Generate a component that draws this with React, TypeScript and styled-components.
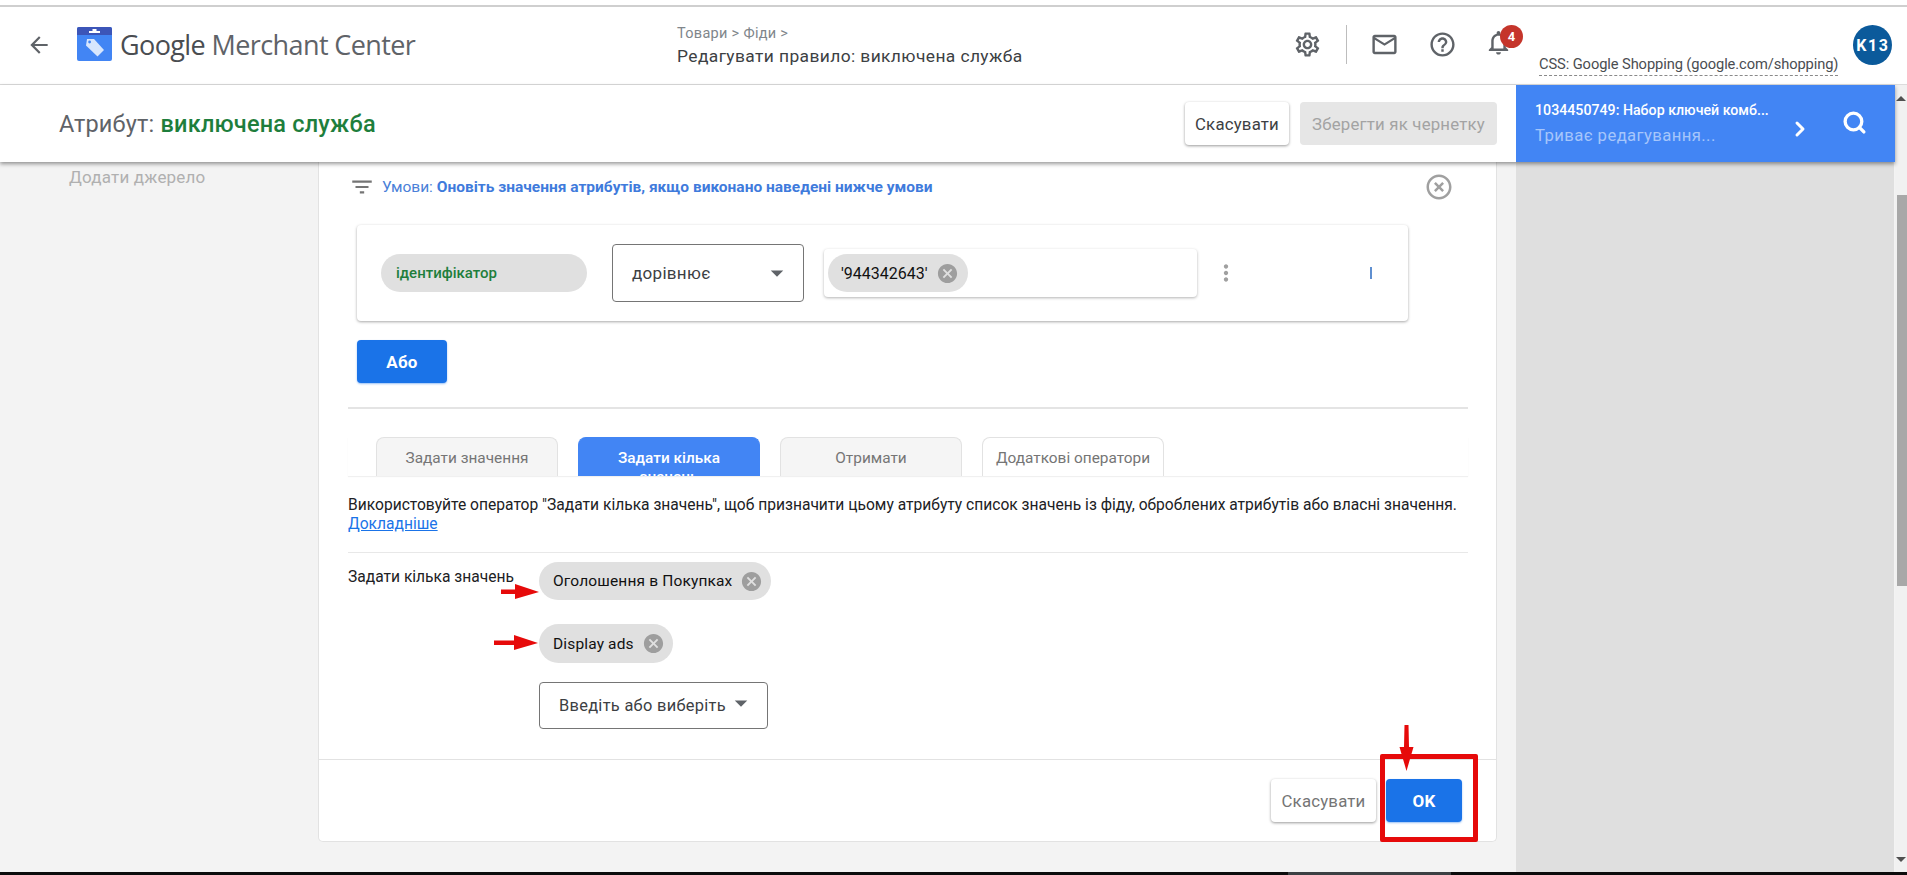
import React from 'react'
import styled, { createGlobalStyle } from 'styled-components'
import { ChevronRight, Search } from 'lucide-react'
import {
  MdArrowBack,
  MdOutlineSettings,
  MdOutlineEmail,
  MdHelpOutline,
  MdNotificationsNone,
  MdFilterList,
  MdCancel,
  MdHighlightOff,
  MdMoreVert,
  MdArrowDropDown,
} from 'react-icons/md'

const GlobalStyle = createGlobalStyle`
  html, body {
    margin: 0;
    padding: 0;
    overflow: hidden;
  }
  * {
    box-sizing: border-box;
  }
  body {
    font-family: Roboto, "Liberation Sans", sans-serif;
    color: #202124;
  }
`

const Page = styled.div`
  width: 1907px;
  height: 875px;
  display: flex;
  flex-direction: column;
  overflow: hidden;
  background: #f3f3f3;
`

const TopLine = styled.div`
  height: 7px;
  background: #fff;
  border-bottom: 2px solid #cfcfcf;
`

const Header = styled.header`
  height: 78px;
  flex: none;
  display: flex;
  align-items: center;
  background: #fff;
  border-bottom: 1px solid #dcdcdc;
  position: relative;
`

const IconSlot = styled.span<{ $size?: number; $color?: string }>`
  display: inline-flex;
  align-items: center;
  justify-content: center;
  flex: none;
  font-size: ${(p) => p.$size ?? 24}px;
  color: ${(p) => p.$color ?? '#5f6368'};
`

const BackSlot = styled(IconSlot)`
  margin-left: 26px;
  margin-top: -1px;
`

const Brand = styled.div`
  display: flex;
  align-items: center;
  width: 625px;
  padding-left: 25px;
  margin-top: -3px;
`

const Wordmark = styled.div`
  margin-left: 8px;
  font-family: "Open Sans", sans-serif;
  font-size: 27px;
  letter-spacing: -0.6px;
  color: #5f6368;
  white-space: nowrap;
`

const WordmarkStrong = styled.span`
  color: #4a4d51;
  font-weight: 500;
`

const Crumbs = styled.div`
  width: 616px;
  display: flex;
  flex-direction: column;
  gap: 4px;
`

const CrumbPath = styled.div`
  font-size: 14.5px;
  letter-spacing: 0.3px;
  color: #80868b;
`

const CrumbTitle = styled.div`
  font-size: 17.4px;
  letter-spacing: 0.4px;
  color: #3c4043;
`

const Tools = styled.div`
  display: flex;
  align-items: center;
  margin-top: -2px;
`

const ToolDivider = styled.div`
  width: 1px;
  height: 39px;
  margin: 0 23px 0 24px;
  background: #bdbdbd;
`

const HelpSlot = styled(IconSlot)`
  margin-left: 29px;
`

const BellWrap = styled.div`
  position: relative;
  margin-left: 27px;
`

const Badge = styled.span`
  position: absolute;
  top: -3px;
  left: 16px;
  width: 23px;
  height: 23px;
  border-radius: 50%;
  background: #c5352b;
  color: #fff;
  font-size: 13px;
  font-weight: 700;
  display: flex;
  align-items: center;
  justify-content: center;
`

const AccountName = styled.div`
  margin-left: 26px;
  margin-top: 40px;
  padding-bottom: 2px;
  border-bottom: 1px dashed #8a8a8a;
  font-size: 14.7px;
  letter-spacing: -0.1px;
  color: #4a4d51;
  white-space: nowrap;
`

const Avatar = styled.div`
  margin-left: 15px;
  margin-top: -1px;
  width: 39px;
  height: 40px;
  border-radius: 50%;
  background: #0b5a9b;
  color: #fff;
  font-size: 16px;
  font-weight: 700;
  letter-spacing: 1.5px;
  display: flex;
  align-items: center;
  justify-content: center;
`

const Workspace = styled.div`
  flex: 1;
  min-height: 0;
  display: flex;
`

const Stage = styled.div`
  flex: 1;
  min-width: 0;
  display: flex;
  flex-direction: column;
`

const SubHeader = styled.div`
  height: 77px;
  flex: none;
  display: flex;
  position: relative;
  z-index: 2;
  box-shadow: 0 2px 4px rgba(0, 0, 0, 0.4);
`

const AttributeBar = styled.div`
  width: 1516px;
  display: flex;
  align-items: center;
  padding: 0 19px 0 59px;
  background: #fff;
`

const AttributeTitle = styled.div`
  flex: 1;
  font-size: 23.5px;
  letter-spacing: 0.2px;
  color: #5f6368;
`

const AttributeValue = styled.span`
  color: #1e7e3c;
  font-weight: 500;
`

const Button = styled.button<{ $variant: 'plain' | 'muted' | 'primary'; $width: number }>`
  width: ${(p) => p.$width}px;
  height: 43px;
  border: none;
  border-radius: 4px;
  padding: 0;
  font-family: Roboto, sans-serif;
  font-size: ${(p) => (p.$variant === 'primary' ? 17 : 16.8)}px;
  font-weight: ${(p) => (p.$variant === 'primary' ? 700 : 400)};
  letter-spacing: 0.2px;
  color: ${(p) =>
    p.$variant === 'primary' ? '#fff' : p.$variant === 'muted' ? '#a3a3a3' : '#3c4043'};
  background: ${(p) =>
    p.$variant === 'primary' ? '#1a73e8' : p.$variant === 'muted' ? '#e6e6e6' : '#fff'};
  box-shadow: ${(p) =>
    p.$variant === 'muted'
      ? 'none'
      : p.$variant === 'primary'
        ? '0 1px 2px rgba(26, 115, 232, 0.45)'
        : '0 1px 3px rgba(0, 0, 0, 0.4)'};
`

const DraftButton = styled(Button)`
  margin-left: 11px;
`

const QueuePanel = styled.div`
  flex: 1;
  display: flex;
  align-items: center;
  padding-left: 19px;
  background: #4285f4;
`

const QueueText = styled.div`
  width: 251px;
  display: flex;
  flex-direction: column;
  gap: 8px;
`

const QueueName = styled.div`
  font-size: 14.2px;
  font-weight: 500;
  color: #fff;
  white-space: nowrap;
`

const QueueStatus = styled.div`
  font-size: 16.7px;
  letter-spacing: 0.4px;
  color: #a6c6fb;
`

const QueueChevron = styled(IconSlot)`
  margin: 10px 0 0 2px;
`

const QueueSearch = styled(IconSlot)`
  margin: -3px 0 0 30px;
`

const ContentRow = styled.div`
  flex: 1;
  min-height: 0;
  display: flex;
`

const SideNav = styled.nav`
  width: 318px;
  flex: none;
  padding: 5px 0 0 69px;
  font-size: 17px;
  letter-spacing: 0.2px;
  color: #b0b0b0;
`

const Card = styled.section`
  width: 1179px;
  height: 680px;
  flex: none;
  display: flex;
  flex-direction: column;
  background: #fff;
  border: 1px solid #e2e2e2;
  border-top: none;
  border-radius: 0 0 5px 5px;
`

const CardBody = styled.div`
  height: 597px;
  flex: none;
  padding: 0 28px 0 29px;
`

const ConditionHead = styled.div`
  height: 63px;
  display: flex;
  align-items: center;
  padding: 0 0 14px 1px;
`

const ConditionText = styled.div`
  flex: 1;
  margin-left: 7px;
  font-size: 15.5px;
  color: #4a80d8;
`

const ConditionStrong = styled.span`
  font-weight: 700;
  color: #3f7bdc;
`

const CloseSlot = styled(IconSlot)`
  margin-right: 14px;
`

const RuleCard = styled.div`
  margin-left: 9px;
  width: 1051px;
  height: 96px;
  display: flex;
  align-items: center;
  padding-left: 24px;
  border-radius: 4px;
  box-shadow: 0 1px 3px rgba(0, 0, 0, 0.35);
`

const FieldPill = styled.div`
  width: 206px;
  height: 38px;
  display: flex;
  align-items: center;
  padding-left: 15px;
  border-radius: 19px;
  background: #e0e0e0;
  color: #1e7e3c;
  font-size: 15px;
  font-weight: 500;
`

const Dropdown = styled.div<{ $width: number; $height: number; $size: number }>`
  width: ${(p) => p.$width}px;
  height: ${(p) => p.$height}px;
  flex: none;
  display: flex;
  align-items: center;
  justify-content: space-between;
  padding: 0 11px 0 19px;
  border: 1px solid #757575;
  border-radius: 4px;
  font-size: ${(p) => p.$size}px;
  letter-spacing: 0.3px;
  color: #3c4043;
`

const OperatorDropdown = styled(Dropdown)`
  margin-left: 25px;
`

const RaisedArrow = styled(IconSlot)`
  margin-top: -5px;
`

const ValueInput = styled.div`
  width: 373px;
  height: 48px;
  margin-left: 20px;
  display: flex;
  align-items: center;
  padding-left: 4px;
  border-radius: 4px;
  box-shadow: 0 1px 3px rgba(0, 0, 0, 0.3);
`

const Chip = styled.div<{ $height: number }>`
  height: ${(p) => p.$height}px;
  flex: none;
  display: inline-flex;
  align-items: center;
  gap: 8px;
  padding: 0 8px 0 14px;
  border-radius: ${(p) => p.$height / 2}px;
  background: #e0e0e0;
  font-size: 15.5px;
  font-weight: 400;
  letter-spacing: 0.15px;
  color: #111;
`

const ValueChip = styled(Chip)`
  padding: 0 9px 0 13px;
  font-size: 16px;
  letter-spacing: 0;
`

const MoreSlot = styled(IconSlot)`
  margin-left: 16px;
`

const CursorMark = styled.div`
  width: 2px;
  height: 12px;
  margin-left: 131px;
  background: #5f8fd0;
`

const OrButton = styled(Button)`
  display: block;
  margin: 19px 0 0 9px;
`

const Divider = styled.hr`
  margin: 24px 0 0;
  border: none;
  height: 2px;
  background: #e4e4e4;
`

const Tabs = styled.div`
  height: 39px;
  margin-top: 28px;
  padding-left: 28px;
  display: flex;
  gap: 20px;
  box-shadow: 0 1px 1px rgba(0, 0, 0, 0.06);
`

const Tab = styled.div<{ $active?: boolean; $plain?: boolean }>`
  width: 182px;
  height: 39px;
  overflow: hidden;
  padding: 11px 20px 0;
  border: 1px solid ${(p) => (p.$active ? '#4285f4' : '#e2e2e2')};
  border-bottom: none;
  border-radius: 8px 8px 0 0;
  background: ${(p) => (p.$active ? '#4285f4' : p.$plain ? '#fff' : '#f5f5f5')};
  color: ${(p) => (p.$active ? '#fff' : '#757575')};
  font-size: 15.4px;
  font-weight: ${(p) => (p.$active ? 500 : 400)};
  line-height: 19px;
  text-align: center;
`

const WideTab = styled(Tab)`
  padding: 11px 0 0;
  white-space: nowrap;
`

const Description = styled.p`
  margin: 20px 0 0;
  font-size: 15.6px;
  line-height: 19px;
  color: #202124;
`

const HelpLink = styled.a`
  color: #1a73e8;
  text-decoration: underline;
`

const ThinDivider = styled.hr`
  margin: 18px 0 0;
  border: none;
  height: 1px;
  background: #e8e8e8;
`

const ValuesGrid = styled.div`
  margin-top: 9px;
  display: grid;
  grid-template-columns: 191px 1fr;
`

const ValuesLabel = styled.div`
  padding-top: 6px;
  font-size: 15.6px;
`

const ValuesList = styled.div`
  display: flex;
  flex-direction: column;
  align-items: flex-start;
`

const ValueEntry = styled.div<{ $gap: number }>`
  position: relative;
  margin-bottom: ${(p) => p.$gap}px;
`

const EntryArrow = styled.svg<{ $left: number; $top: number }>`
  position: absolute;
  left: ${(p) => p.$left}px;
  top: ${(p) => p.$top}px;
`

const CardFooter = styled.footer`
  flex: 1;
  position: relative;
  display: flex;
  align-items: flex-start;
  justify-content: flex-end;
  gap: 10px;
  padding: 19px 34px 0 0;
  border-top: 1px solid #e2e2e2;
`

const CancelButton = styled(Button)`
  color: #757575;
`

const RedFrame = styled.div`
  position: absolute;
  right: 18px;
  top: -6px;
  width: 98px;
  height: 88px;
  border: 5px solid #e60a0a;
  border-radius: 2px;
`

const FooterArrow = styled.svg`
  position: absolute;
  left: 1080px;
  top: -35px;
`

const SidePanel = styled.aside`
  width: 378px;
  flex: none;
  margin-left: 19px;
  background: #dfdfdf;
`

const ScrollTrack = styled.div`
  width: 12px;
  flex: none;
  display: flex;
  flex-direction: column;
  align-items: flex-end;
  justify-content: space-between;
  background: #f1f1f1;
  position: relative;
  padding: 11px 0 10px;
`

const ScrollArrow = styled.div<{ $down?: boolean }>`
  width: 0;
  height: 0;
  margin-right: 1px;
  border-left: 5px solid transparent;
  border-right: 5px solid transparent;
  border-${(p) => (p.$down ? 'top' : 'bottom')}: 5px solid #505050;
`

const ScrollThumb = styled.div`
  position: absolute;
  top: 110px;
  right: 0;
  width: 10px;
  height: 391px;
  background: #a8a8a8;
`

const BottomBar = styled.div`
  height: 3px;
  flex: none;
  background: #0c0c0c;
  display: flex;
  padding-left: 1288px;
`

const BottomThumb = styled.div`
  width: 163px;
  background: #3c4043;
`

function MerchantLogo() {
  return (
    <svg width="35" height="34" viewBox="0 0 35 34">
      <rect width="35" height="34" rx="2" fill="#4285f4" />
      <path d="M2 0h31a2 2 0 0 1 2 2v6H0V2a2 2 0 0 1 2-2z" fill="#3c55b8" />
      <rect x="12" y="4" width="11" height="2" fill="#fff" />
      <rect x="15.5" y="2" width="4" height="3" fill="#fff" />
      <path d="M10 12h7l10 11-6.5 6.5L9 18.5z" fill="#d7e6fd" />
      <circle cx="12.6" cy="15" r="1.4" fill="#4285f4" />
    </svg>
  )
}

function RedArrow({ width }: { width: number }) {
  return (
    <path
      d={`M0 5.5 L${width - 24} 5.5 L${width - 24} 0 L${width} 8 L${width - 24} 15 L${width - 24} 10 L0 10 Z`}
      fill="#e60a0a"
    />
  )
}

export default function App() {
  return (
    <Page>
      <GlobalStyle />
      <TopLine />
      <Header>
        <BackSlot $size={26}>
          <MdArrowBack />
        </BackSlot>
        <Brand>
          <MerchantLogo />
          <Wordmark>
            <WordmarkStrong>Google</WordmarkStrong> Merchant Center
          </Wordmark>
        </Brand>
        <Crumbs>
          <CrumbPath>Товари &gt; Фіди &gt;</CrumbPath>
          <CrumbTitle>Редагувати правило: виключена служба</CrumbTitle>
        </Crumbs>
        <Tools>
          <IconSlot $size={29}>
            <MdOutlineSettings />
          </IconSlot>
          <ToolDivider />
          <IconSlot $size={29}>
            <MdOutlineEmail />
          </IconSlot>
          <HelpSlot $size={29}>
            <MdHelpOutline />
          </HelpSlot>
          <BellWrap>
            <IconSlot $size={29}>
              <MdNotificationsNone />
            </IconSlot>
            <Badge>4</Badge>
          </BellWrap>
        </Tools>
        <AccountName>CSS: Google Shopping (google.com/shopping)</AccountName>
        <Avatar>K13</Avatar>
      </Header>
      <Workspace>
        <Stage>
          <SubHeader>
            <AttributeBar>
              <AttributeTitle>
                Атрибут: <AttributeValue>виключена служба</AttributeValue>
              </AttributeTitle>
              <Button $variant="plain" $width={104}>
                Скасувати
              </Button>
              <DraftButton $variant="muted" $width={197}>
                Зберегти як чернетку
              </DraftButton>
            </AttributeBar>
            <QueuePanel>
              <QueueText>
                <QueueName>1034450749: Набор ключей комб...</QueueName>
                <QueueStatus>Триває редагування...</QueueStatus>
              </QueueText>
              <QueueChevron $color="#fff">
                <ChevronRight size={24} strokeWidth={3} />
              </QueueChevron>
              <QueueSearch $color="#fff">
                <Search size={25} strokeWidth={3.2} />
              </QueueSearch>
            </QueuePanel>
          </SubHeader>
          <ContentRow>
            <SideNav>Додати джерело</SideNav>
            <Card>
              <CardBody>
                <ConditionHead>
                  <IconSlot $size={26} $color="#757575">
                    <MdFilterList />
                  </IconSlot>
                  <ConditionText>
                    Умови: <ConditionStrong>Оновіть значення атрибутів, якщо виконано наведені нижче умови</ConditionStrong>
                  </ConditionText>
                  <CloseSlot $size={30} $color="#a0a0a0">
                    <MdHighlightOff />
                  </CloseSlot>
                </ConditionHead>
                <RuleCard>
                  <FieldPill>ідентифікатор</FieldPill>
                  <OperatorDropdown $width={192} $height={58} $size={17}>
                    дорівнює
                    <IconSlot $size={30}>
                      <MdArrowDropDown />
                    </IconSlot>
                  </OperatorDropdown>
                  <ValueInput>
                    <ValueChip $height={38}>
                      '944342643'
                      <IconSlot $size={23} $color="#9e9e9e">
                        <MdCancel />
                      </IconSlot>
                    </ValueChip>
                  </ValueInput>
                  <MoreSlot $size={26} $color="#a0a0a0">
                    <MdMoreVert />
                  </MoreSlot>
                  <CursorMark />
                </RuleCard>
                <OrButton $variant="primary" $width={90}>
                  Або
                </OrButton>
                <Divider />
                <Tabs>
                  <Tab>Задати значення</Tab>
                  <Tab $active>Задати кілька значень</Tab>
                  <Tab>Отримати</Tab>
                  <WideTab $plain>Додаткові оператори</WideTab>
                </Tabs>
                <Description>
                  Використовуйте оператор "Задати кілька значень", щоб призначити цьому атрибуту список значень із фіду, оброблених атрибутів або власні значення.
                  <br />
                  <HelpLink>Докладніше</HelpLink>
                </Description>
                <ThinDivider />
                <ValuesGrid>
                  <ValuesLabel>Задати кілька значень</ValuesLabel>
                  <ValuesList>
                    <ValueEntry $gap={24}>
                      <Chip $height={38}>
                        Оголошення в Покупках
                        <IconSlot $size={23} $color="#9e9e9e">
                          <MdCancel />
                        </IconSlot>
                      </Chip>
                      <EntryArrow $left={-38} $top={22} width="38" height="15" viewBox="0 0 38 15">
                        <RedArrow width={38} />
                      </EntryArrow>
                    </ValueEntry>
                    <ValueEntry $gap={19}>
                      <Chip $height={39}>
                        Display ads
                        <IconSlot $size={23} $color="#9e9e9e">
                          <MdCancel />
                        </IconSlot>
                      </Chip>
                      <EntryArrow $left={-45} $top={11} width="44" height="15" viewBox="0 0 44 15">
                        <RedArrow width={44} />
                      </EntryArrow>
                    </ValueEntry>
                    <Dropdown $width={229} $height={47} $size={16.4}>
                      Введіть або виберіть
                      <RaisedArrow $size={30}>
                        <MdArrowDropDown />
                      </RaisedArrow>
                    </Dropdown>
                  </ValuesList>
                </ValuesGrid>
              </CardBody>
              <CardFooter>
                <CancelButton $variant="plain" $width={105}>
                  Скасувати
                </CancelButton>
                <Button $variant="primary" $width={76}>
                  OK
                </Button>
                <RedFrame />
                <FooterArrow width="15" height="46" viewBox="0 0 15 46">
                  <path d="M5.5 0 L9.5 0 L10 22 L14.5 22 L7.5 46 L0.5 22 L5 22 Z" fill="#e60a0a" />
                </FooterArrow>
              </CardFooter>
            </Card>
            <SidePanel />
          </ContentRow>
        </Stage>
        <ScrollTrack>
          <ScrollArrow />
          <ScrollThumb />
          <ScrollArrow $down />
        </ScrollTrack>
      </Workspace>
      <BottomBar>
        <BottomThumb />
      </BottomBar>
    </Page>
  )
}
